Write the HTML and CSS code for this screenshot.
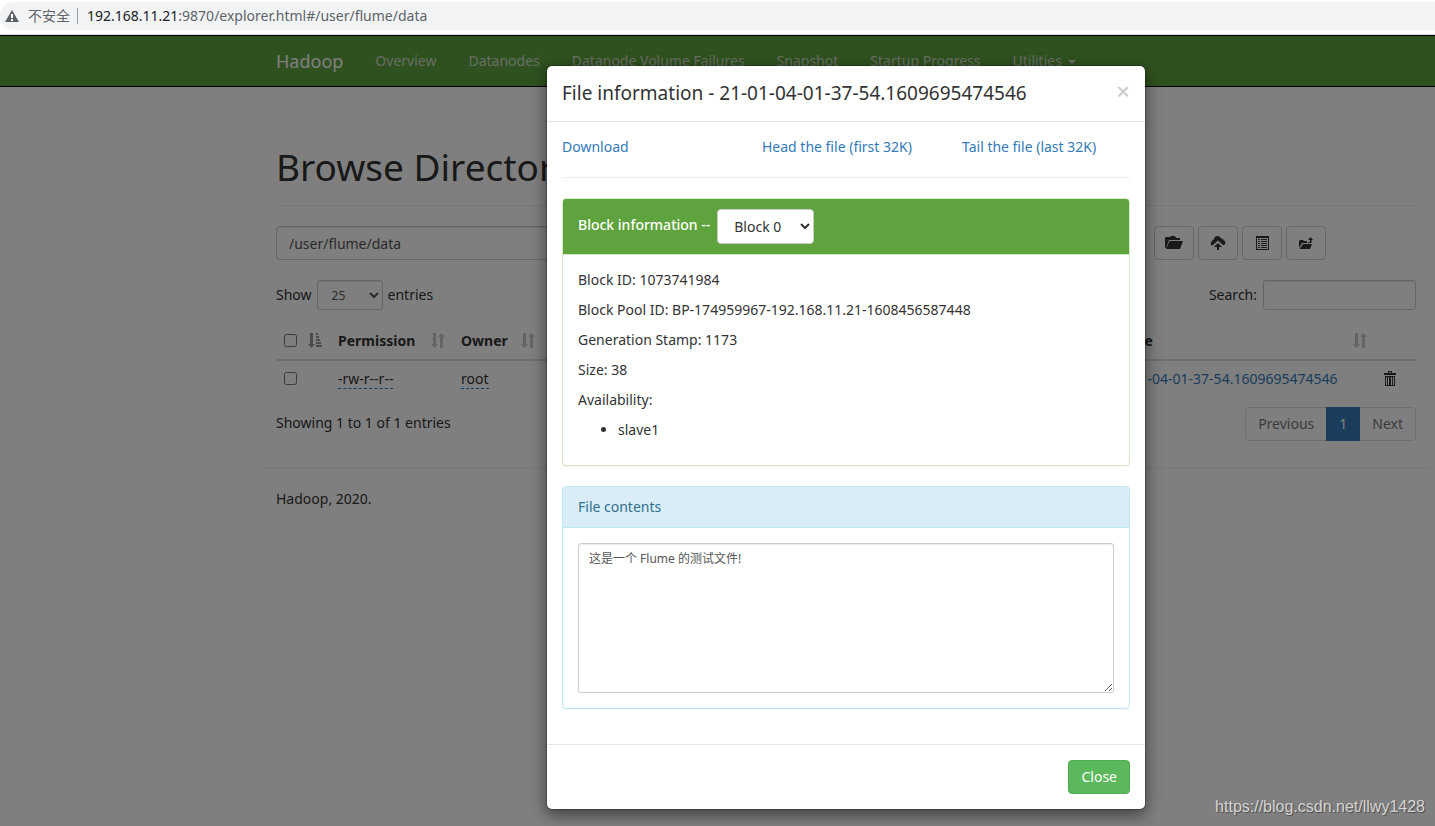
FILE: index.html
```html
<!DOCTYPE html>
<html lang="en">
<head>
<meta charset="utf-8">
<title>Browsing HDFS</title>
<link rel="stylesheet" href="styles.css">
</head>
<body>
<svg class="sprite" aria-hidden="true">
  <symbol id="sort" viewBox="0 0 14 15"><path d="M2 0h3v11h2l-3.500 4L0 11h2zM9 15h3V4h2l-3.500-4L7 4h2z"/></symbol>
  <symbol id="sort-asc" viewBox="0 0 14 15"><path d="M2 0h3v11h2l-3.500 4L0 11h2zM8 0h2v2H8zM8 3h3v2H8zM8 6h4v2H8zM8 9h5v2H8zM8 12h6v2H8z"/></symbol>
</svg>

<header class="address-bar">
  <div class="omnibox">
    <svg class="warning" viewBox="0 0 14 12" aria-hidden="true"><path fill="#5f6368" d="M7 0l7 12H0z"/><path fill="#fff" d="M6 4h2v4H6zM6 9h2v2H6z"/></svg>
    <span class="security" lang="zh">不安全</span>
    <span class="url"><b>192.168.11.21</b>:9870/explorer.html#/user/flume/data</span>
  </div>
</header>

<div class="page">
  <nav class="navbar">
    <a class="brand" href="#">Hadoop</a>
    <a href="#">Overview</a>
    <a href="#">Datanodes</a>
    <a href="#">Datanode Volume Failures</a>
    <a href="#">Snapshot</a>
    <a href="#">Startup Progress</a>
    <a href="#">Utilities <span class="caret"></span></a>
  </nav>

  <main class="container">
    <h1>Browse Directory</h1>
    <div class="path-row">
      <input class="control" type="text" value="/user/flume/data" aria-label="Directory">
      <div class="tools">
        <button type="button" class="btn" aria-label="Create directory"><svg width="18" height="14" viewBox="0 0 18 14"><path d="M0 12V2l1-1h4l1-1h4l1 2h4v2H4L1 12zM4.500 5H18l-3 8H1z"/></svg></button>
        <button type="button" class="btn" aria-label="Upload files"><svg width="16" height="14" viewBox="0 0 16 14"><path d="M3 9L8 4.500 13 9h1c2-1 2-4-.5-4.500C13.500 3 12 2.500 11 2.500 10 .5 8.500 0 7.500 0 5.500 0 4 1.500 4 3.500 2.500 3.500 2 4.500 2 5.500 0 6.500.5 9 2 9.500zM8 7l4 4H9v3H7v-3H4z"/></svg></button>
        <button type="button" class="btn" aria-label="Cut and paste"><svg width="14" height="14" viewBox="0 0 14 14"><path fill-rule="evenodd" d="M1 0h13v14H1zm1 2v11h11V2zM3 3h2v1H3zm3 0h6v1H6zM3 5h2v1H3zm3 0h6v1H6zM3 7h2v1H3zm3 0h6v1H6zM3 9h2v1H3zm3 0h6v1H6zM3 11h2v1H3zm3 0h6v1H6z"/></svg></button>
        <button type="button" class="btn" aria-label="Parent directory"><svg width="16" height="14" viewBox="0 0 16 14"><path d="M1 12V5l1-1h3l1 1h3v2H4L1 12zM5 8h9l-2 5H1.500zM12.500 1L15 4h-1.500v3H10V6h2V4h-2z"/></svg></button>
      </div>
    </div>

    <div class="filter-row">
      <label class="length">Show <select class="control small"><option>25</option></select> entries</label>
      <label class="search">Search: <input class="control small" type="search"></label>
    </div>

    <table>
      <thead>
        <tr>
          <th class="col-check"><span class="head"><input type="checkbox" aria-label="Select all"><svg class="sort current"><use href="#sort-asc"/></svg></span></th>
          <th class="col-permission"><span class="head">Permission<svg class="sort"><use href="#sort"/></svg></span></th>
          <th class="col-owner"><span class="head">Owner<svg class="sort"><use href="#sort"/></svg></span></th>
          <th></th>
          <th class="col-name"><span class="head">Name<svg class="sort"><use href="#sort"/></svg></span></th>
          <th class="col-action"></th>
        </tr>
      </thead>
      <tbody>
        <tr>
          <td><input type="checkbox" aria-label="Select file"></td>
          <td><span class="editable">-rw-r--r--</span></td>
          <td><span class="editable">root</span></td>
          <td></td>
          <td class="file"><a href="#">21-01-04-01-37-54.1609695474546</a></td>
          <td><button type="button" class="trash" aria-label="Delete"><svg width="14" height="16" viewBox="0 0 14 16"><path fill-rule="evenodd" d="M1 2h4V0h4v2h4v2H1zM6 1v1h2V1zM2 5h10v10H2zm1 1v8h1V6zm2 0v8h1V6zm3 0v8h1V6zm2 0v8h1V6z"/></svg></button></td>
        </tr>
      </tbody>
    </table>

    <div class="table-foot">
      <p>Showing 1 to 1 of 1 entries</p>
      <div class="pagination"><a href="#">Previous</a><a class="active" href="#">1</a><a href="#">Next</a></div>
    </div>
    <footer>Hadoop, 2020.</footer>
  </main>

  <div class="backdrop">
    <section class="modal" role="dialog" aria-labelledby="modal-title">
      <div class="modal-header">
        <h4 id="modal-title">File information - 21-01-04-01-37-54.1609695474546</h4>
        <button type="button" class="dismiss" aria-label="Dismiss">×</button>
      </div>
      <div class="modal-body">
        <div class="links">
          <a href="#">Download</a>
          <a href="#">Head the file (first 32K)</a>
          <a href="#">Tail the file (last 32K)</a>
        </div>
        <div class="panel success">
          <div class="panel-heading"><label for="block">Block information --</label>
            <select id="block" class="block-select"><option>Block 0</option></select></div>
          <div class="panel-body">
            <p>Block ID: 1073741984</p>
            <p>Block Pool ID: BP-174959967-192.168.11.21-1608456587448</p>
            <p>Generation Stamp: 1173</p>
            <p>Size: 38</p>
            <p>Availability:</p>
            <ul><li>slave1</li></ul>
          </div>
        </div>
        <div class="panel info">
          <div class="panel-heading"><label for="contents">File contents</label></div>
          <div class="panel-body"><textarea id="contents" lang="zh">这是一个 Flume 的测试文件!</textarea></div>
        </div>
      </div>
      <div class="modal-footer"><button type="button" class="close">Close</button></div>
    </section>
    <span class="watermark">https://blog.csdn.net/llwy1428</span>
  </div>
</div>
</body>
</html>
```
FILE: styles.css
```css
* { box-sizing: border-box; }
body {
  margin: 0;
  min-height: 100vh;
  display: flex;
  flex-direction: column;
  font: 14px/20px "Noto Sans", "Noto Sans CJK SC", sans-serif;
  color: #333;
  background: #fff;
}
a { color: #337ab7; text-decoration: none; }
p, h1, h4, ul { margin: 0; font-weight: 400; }
input, select, button, textarea { font: inherit; color: inherit; margin: 0; }
svg { fill: currentColor; display: block; }
.sprite { display: none; }

/* Browser address bar */
.address-bar { height: 35px; padding: 2px 0 4px; border-bottom: 1px solid #dadce0; }
.omnibox {
  height: 28px;
  display: flex;
  align-items: center;
  padding-left: 5px;
  background: #f1f3f4;
  border-radius: 14px 0 0 14px;
  color: #5f6368;
}
.warning { width: 14px; height: 12px; margin-right: 9px; }
.security { padding-right: 7px; border-right: 1px solid #9aa0a6; line-height: 16px; }
.url { padding-left: 9px; }
.url b { font-weight: 400; color: #202124; }

/* Page */
.page { position: relative; flex: 1; }
.navbar {
  display: flex;
  gap: 32px;
  height: 52px;
  padding: 15px 19px 0 276px;
  background: #5fa33e;
  border: solid #080808;
  border-width: 1px 0;
}
.navbar a { color: #cfdcc8; white-space: nowrap; }
.navbar .brand { font-size: 18px; color: #fff; }
.caret {
  display: inline-block;
  margin-left: 2px;
  vertical-align: middle;
  border-top: 4px solid;
  border-left: 4px solid transparent;
  border-right: 4px solid transparent;
}
.container { padding: 60px 19px 0 276px; }
h1 { font-size: 37px; line-height: 40px; padding-bottom: 18px; border-bottom: 1px solid #eee; white-space: nowrap; }
.control {
  height: 34px;
  padding: 6px 12px;
  border: 1px solid #ccc;
  border-radius: 4px;
  background: #fff;
  color: #555;
  box-shadow: inset 0 1px 1px rgba(0, 0, 0, .075);
}
.control.small { height: 30px; padding: 4px 10px; border-radius: 3px; font-size: 12px; }
.path-row { display: flex; gap: 15px; padding: 20px 90px 20px 0; }
.path-row .control { flex: 1; }
.tools { display: flex; gap: 4px; }
.btn {
  display: grid;
  place-items: center;
  width: 40px;
  height: 34px;
  padding: 0;
  border: 1px solid #ccc;
  border-radius: 4px;
  background: #fff;
}
.filter-row { display: flex; justify-content: space-between; align-items: center; }
.filter-row select { width: 66px; }
.length { display: flex; align-items: center; gap: 5px; }
.search { display: flex; align-items: center; gap: 6px; }
.search .control { width: 153px; }

table { width: 100%; margin-top: 10px; border-collapse: collapse; table-layout: fixed; }
th { height: 40px; padding: 2px 8px 0; border-bottom: 2px solid #ddd; text-align: left; }
td { height: 38px; padding: 0 8px 2px; }
th.col-check { width: 54px; }
th.col-permission { width: 123px; }
th.col-owner { width: 90px; }
th.col-name { width: 272px; }
th.col-action { width: 41px; }
.head { display: flex; align-items: center; justify-content: space-between; }
.sort { width: 14px; height: 15px; color: #c8c8c8; }
.sort.current { color: #999; }
input[type="checkbox"] { display: block; width: 13px; height: 13px; }
.editable { border-bottom: 1px dashed #08c; }
.file { white-space: nowrap; }
.trash { display: block; padding: 0; border: 0; background: none; }

.table-foot { display: flex; justify-content: space-between; padding-top: 9px; }
.table-foot p { padding-top: 6px; }
.pagination { display: flex; border: 1px solid #ddd; border-radius: 4px; height: 34px; }
.pagination a { padding: 6px 12px; color: #777; }
.pagination .active { margin: -1px 0; padding: 7px 13px; background: #337ab7; color: #fff; }
footer { margin: 27px -15px 0; padding: 20px 15px 0; border-top: 1px solid #eee; }

/* Dialog */
.backdrop { position: absolute; inset: 0; padding: 30px 15px 16px 546px; background: rgba(0, 0, 0, .5); }
.modal {
  max-width: 600px;
  background: #fff;
  background-clip: padding-box;
  border: 1px solid rgba(0, 0, 0, .2);
  border-radius: 6px;
  box-shadow: 0 5px 15px rgba(0, 0, 0, .5);
}
.modal-header { display: flex; justify-content: space-between; padding: 15px; border-bottom: 1px solid #e5e5e5; }
h4 { font-size: 19px; line-height: 25px; }
.dismiss { padding: 0; border: 0; background: none; color: #ccc; font-size: 24px; line-height: 20px; font-weight: 500; align-self: flex-start; }
.modal-body { padding: 15px 15px 35px; }
.links { display: grid; grid-template-columns: 200px 200px 1fr; margin-bottom: 20px; padding-bottom: 20px; border-bottom: 1px solid #eee; white-space: nowrap; }
.panel { border: 1px solid #d6e9c6; border-radius: 4px; box-shadow: 0 1px 1px rgba(0, 0, 0, .05); }
.panel + .panel { margin-top: 20px; }
.panel-heading { padding: 10px 15px; border-bottom: 1px solid #d6e9c6; border-radius: 3px 3px 0 0; }
.success .panel-heading { display: flex; gap: 7px; background: #5fa33e; color: #fff; font-weight: 500; }
.success label { padding-top: 6px; }
.block-select { width: 97px; height: 35px; padding: 6px 12px; border: 1px solid #ccc; border-radius: 4px; background: #fff; color: #333; font-weight: 400; }
.panel-body { padding: 15px; }
.panel-body p, .panel-body ul { margin-bottom: 10px; }
.panel-body ul { padding-left: 40px; }
.info, .info .panel-heading { border-color: #bce8f1; }
.info .panel-heading { background: #d9edf7; color: #31708f; }
textarea {
  display: block;
  width: 100%;
  height: 150px;
  padding: 6px 10px;
  border: 1px solid #ccc;
  border-radius: 3px;
  box-shadow: inset 0 1px 1px rgba(0, 0, 0, .075);
  font-size: 12px;
  line-height: 18px;
  color: #555;
}
.modal-footer { padding: 15px; border-top: 1px solid #e5e5e5; text-align: right; }
.close { display: inline-block; vertical-align: top; height: 34px; padding: 6px 12px; border: 1px solid #4cae4c; border-radius: 4px; background: #5cb85c; color: #fff; line-height: 20px; }
.watermark {
  position: absolute;
  right: 10px;
  bottom: 10px;
  font: 16px/18px "Liberation Sans", sans-serif;
  color: #d4d4d4;
  text-shadow: 1px 1px 1px rgba(0, 0, 0, .4);
}
```
